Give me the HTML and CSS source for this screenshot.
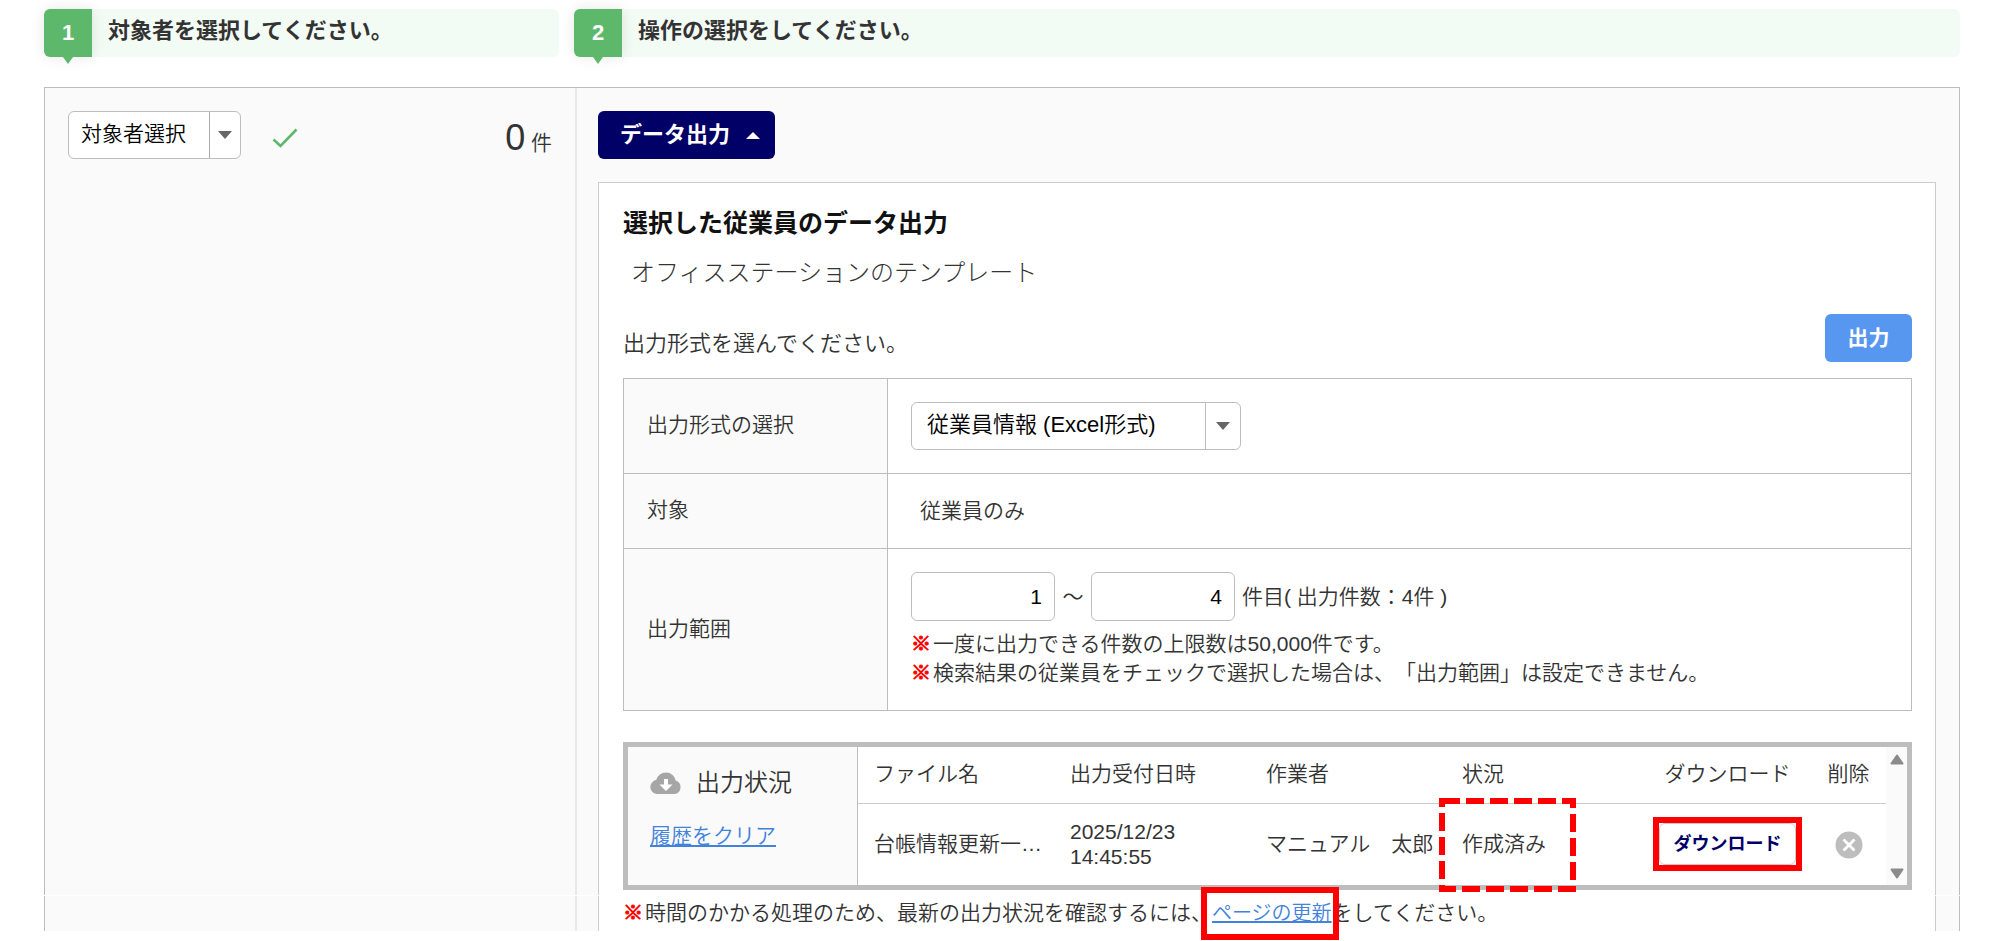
FILE: index.html
```html
<!DOCTYPE html>
<html lang="ja">
<head>
<meta charset="utf-8">
<title>データ出力</title>
<link rel="stylesheet" href="styles.css">
</head>
<body>
<main class="page">
  <ol class="steps">
    <li class="step"><span class="step-number">1</span><span class="step-label">対象者を選択してください。</span></li>
    <li class="step"><span class="step-number">2</span><span class="step-label">操作の選択をしてください。</span></li>
  </ol>

  <div class="workspace">
    <section class="target">
      <div class="split-button">
        <button type="button" class="split-main">対象者選択</button>
        <button type="button" class="split-toggle" aria-label="対象者選択のメニューを開く"><span class="caret"></span></button>
      </div>
      <svg class="check" viewBox="0 0 26 20" aria-hidden="true"><path d="M1.5 11.5 8.5 18 24.5 1.5" fill="none" stroke="#5eb86c" stroke-width="2.6"/></svg>
      <p class="count"><span class="count-number">0</span> 件</p>
    </section>

    <section class="operation">
      <button type="button" class="tab-button">データ出力<span class="caret caret-up"></span></button>

      <div class="card">
        <h1 class="card-title">選択した従業員のデータ出力</h1>
        <h2 class="card-subtitle">オフィスステーションのテンプレート</h2>
        <div class="card-action">
          <p class="lead">出力形式を選んでください。</p>
          <button type="button" class="output-button">出力</button>
        </div>

        <table class="settings">
          <tr>
            <th scope="row"><label for="format">出力形式の選択</label></th>
            <td>
              <div class="select-box">
                <select id="format"><option>従業員情報 (Excel形式)</option></select>
                <span class="select-arrow"><span class="caret"></span></span>
              </div>
            </td>
          </tr>
          <tr>
            <th scope="row">対象</th>
            <td><p class="target-text">従業員のみ</p></td>
          </tr>
          <tr>
            <th scope="row">出力範囲</th>
            <td>
              <div class="range">
                <input type="text" value="1" aria-label="開始件目">
                <span class="wave">～</span>
                <input type="text" value="4" aria-label="終了件目">
                <span class="range-text">件目( 出力件数：4件 )</span>
              </div>
              <p class="note"><span class="mark">※</span>一度に出力できる件数の上限数は50,000件です。</p>
              <p class="note"><span class="mark">※</span>検索結果の従業員をチェックで選択した場合は、「出力範囲」は設定できません。</p>
            </td>
          </tr>
        </table>

        <div class="status">
          <div class="status-side">
            <p class="status-title">
              <svg class="cloud" viewBox="0 0 32 22" aria-hidden="true">
                <path d="M7 22a7 7 0 0 1-.8-13.9A10 10 0 0 1 25.700 8.500 7 7 0 0 1 25 22z" fill="#a6a6a6"/>
                <path d="M14 7h4v5.500h4.500L16 19l-6.500-6.500H14z" fill="#fff"/>
              </svg>
              出力状況
            </p>
            <a href="#clear" class="link">履歴をクリア</a>
          </div>
          <table class="history">
            <thead>
              <tr><th>ファイル名</th><th>出力受付日時</th><th>作業者</th><th>状況</th><th class="center">ダウンロード</th><th class="delete">削除</th></tr>
            </thead>
            <tbody>
              <tr>
                <td>台帳情報更新一…</td>
                <td class="date">2025/12/23<br>14:45:55</td>
                <td>マニュアル　太郎</td>
                <td class="state">作成済み
                  <svg class="dashed-frame" viewBox="0 0 137 94" aria-hidden="true"><path d="M3 3h131v88H3z" fill="none" stroke="#f00" stroke-width="6" stroke-dasharray="18 6"/></svg>
                </td>
                <td class="center"><span class="download-frame"><button type="button" class="download">ダウンロード</button></span></td>
                <td class="delete">
                  <button type="button" class="remove" aria-label="削除">
                    <svg viewBox="0 0 28 28" aria-hidden="true"><circle cx="14" cy="14" r="13.500" fill="#bdbdbd"/><path d="M8.500 8.500l11 11m0-11l-11 11" stroke="#fff" stroke-width="2.800"/></svg>
                  </button>
                </td>
              </tr>
            </tbody>
          </table>
          <div class="scrollbar" aria-hidden="true">
            <svg viewBox="0 0 14 11"><path d="M7 1.500 12.500 9.500h-11z" fill="#8b8b8b" stroke="#8b8b8b" stroke-width="2" stroke-linejoin="round"/></svg>
            <svg viewBox="0 0 14 11"><path d="M7 9.500 1.500 1.500h11z" fill="#8b8b8b" stroke="#8b8b8b" stroke-width="2" stroke-linejoin="round"/></svg>
          </div>
        </div>

        <p class="note footnote"><span class="mark">※</span>時間のかかる処理のため、最新の出力状況を確認するには、<span class="framed"><a href="#reload" class="link">ページの更新</a></span>をしてください。</p>
      </div>
    </section>
  </div>
</main>
</body>
</html>
```
FILE: styles.css
```css
* {
  box-sizing: border-box;
}

body {
  margin: 0;
  background: #fff;
  color: #333;
  font-family: "Liberation Sans", "Noto Sans CJK JP", sans-serif;
  font-size: 21px;
  font-weight: 350;
  line-height: 30px;
  text-spacing-trim: space-all;
}

h1, h2, p, ol {
  margin: 0;
  padding: 0;
}

button, input, select {
  margin: 0;
  color: #000;
  font: inherit;
}

.page {
  padding: 9px 42px 9px 44px;
}

/* Step headings */
.steps {
  display: grid;
  grid-template-columns: 515px 1fr;
  gap: 15px;
  list-style: none;
}

.step {
  display: flex;
  height: 48px;
  border-radius: 6px;
  background: #f3fbf5;
  font-size: 22px;
  font-weight: bold;
  line-height: 44px;
}

.step-number {
  position: relative;
  width: 48px;
  border-radius: 6px 0 0 6px;
  background: #5eb86c;
  box-shadow: 0 0 14px rgba(0, 0, 0, 0.1);
  color: #fff;
  line-height: 48px;
  text-align: center;
}

.step-number::after {
  content: "";
  position: absolute;
  top: 100%;
  left: 19px;
  border: 5px solid transparent;
  border-top: 7px solid #5eb86c;
  border-bottom: 0;
}

.step-label {
  padding-left: 16px;
}

/* Two-pane work area */
.workspace {
  position: relative;
  display: flex;
  margin-top: 30px;
  border: 1px solid #bdbdbd;
  border-bottom: 0;
  background: #fafafa;
}

.workspace::after {
  content: "";
  position: absolute;
  right: -1px;
  bottom: 35px;
  left: -1px;
  height: 1px;
  background: #fff;
}

.target {
  display: flex;
  flex: none;
  align-items: flex-start;
  width: 532px;
  padding: 23px 23px 0 23px;
  border-right: 2px solid #e8e8e8;
}

.split-button {
  display: flex;
  height: 48px;
  border: 1px solid #bdbdbd;
  border-radius: 6px;
  background: #fff;
}

.split-main,
.split-toggle {
  border: 0;
  background: none;
}

.split-main {
  width: 140px;
  padding: 0 20px 2px 12px;
  text-align: left;
  white-space: nowrap;
}

.split-toggle {
  display: flex;
  align-items: center;
  justify-content: center;
  width: 31px;
  padding: 0;
  border-left: 1px solid #aaa;
}

.caret {
  border: 7px solid transparent;
  border-top: 8px solid #666;
  border-bottom: 0;
}

.caret-up {
  border: 7px solid transparent;
  border-top: 0;
  border-bottom: 7px solid #fff;
}

.check {
  width: 26px;
  height: 20px;
  margin: 17px 0 0 31px;
}

.count {
  margin: 7px 0 0 auto;
  line-height: 40px;
}

.count-number {
  font-size: 36px;
}

.operation {
  flex: 1;
  min-width: 0;
  padding: 23px 23px 0 21px;
}

.tab-button {
  display: flex;
  align-items: center;
  gap: 16px;
  height: 48px;
  padding: 0 15px 0 22px;
  border: 0;
  border-radius: 6px;
  background: #006;
  color: #fff;
  font-size: 22px;
  font-weight: bold;
}

.card {
  margin-top: 23px;
  padding: 22px 23px 3px 24px;
  border: 1px solid #ccc;
  border-bottom: 0;
  background: #fff;
}

.card-title {
  color: #111;
  font-size: 25px;
  line-height: 36px;
}

.card-subtitle {
  margin-top: 14px;
  padding-left: 8px;
  font-size: 24px;
  font-weight: 300;
  line-height: 36px;
}

.card-action {
  display: flex;
  align-items: flex-end;
  justify-content: space-between;
  margin: 23px 0 16px;
}

.lead {
  font-size: 22px;
  line-height: 36px;
}

.output-button {
  width: 87px;
  height: 48px;
  padding: 0;
  border: 0;
  border-radius: 6px;
  background: #5797f0;
  color: #fff;
  font-weight: bold;
}

/* Output settings */
.settings {
  width: 100%;
  border-collapse: collapse;
}

.settings th,
.settings td {
  padding: 23px;
  border: 1px solid #bdbdbd;
  font-weight: inherit;
  text-align: left;
}

.settings th {
  width: 264px;
  padding: 20px 23px 22px;
  background: #fafafa;
}

.settings td {
  background: #fff;
}

.target-text {
  padding: 0 9px;
  line-height: 28px;
}

.select-box {
  position: relative;
  width: 330px;
}

.select-box select {
  display: block;
  width: 100%;
  height: 48px;
  padding: 0 40px 2px 15px;
  appearance: none;
  border: 1px solid #bdbdbd;
  border-radius: 6px;
  background: #fff;
  font-size: 22px;
}

.select-arrow {
  position: absolute;
  top: 0;
  right: 0;
  display: flex;
  align-items: center;
  justify-content: center;
  width: 36px;
  height: 48px;
  padding-right: 2px;
  border-left: 1px solid #bdbdbd;
  pointer-events: none;
}

.range {
  display: flex;
  align-items: center;
  margin-bottom: 8px;
}

.range input {
  width: 144px;
  height: 49px;
  padding: 0 12px;
  border: 1px solid #bdbdbd;
  border-radius: 6px;
  background: #fff;
  text-align: right;
}

.wave {
  width: 36px;
  text-align: center;
}

.range-text {
  padding-left: 7px;
}

.note {
  line-height: 29px;
}

.mark {
  margin-right: 2px;
  color: #f00;
  font-size: 20px;
  font-weight: bold;
  line-height: 20px;
  -webkit-text-stroke: 1px #f00;
}

/* Output status */
.status {
  display: flex;
  height: 148px;
  margin-top: 31px;
  border: 5px solid #bdbdbd;
}

.status-side {
  flex: none;
  width: 230px;
  padding: 18px 22px;
  border-right: 1px solid #bdbdbd;
  background: #fafafa;
}

.status-title {
  display: flex;
  align-items: center;
  gap: 14px;
  margin-bottom: 20px;
  font-size: 24px;
  line-height: 36px;
}

.cloud {
  width: 32px;
  height: 22px;
}

.link {
  color: #4182dd;
  text-decoration: underline;
}

.history {
  flex: 1;
  border-collapse: collapse;
  table-layout: fixed;
}

.history th,
.history td {
  width: 196px;
  padding: 0 0 0 16px;
  font-weight: inherit;
  text-align: left;
  white-space: nowrap;
}

.history th {
  height: 56px;
  padding-bottom: 2px;
  border-bottom: 1px solid #ccc;
}

.history th.center,
.history td.center {
  width: auto;
  padding-left: 2px;
  text-align: center;
}

.history th.delete,
.history td.delete {
  width: 75px;
  padding-left: 0;
  text-align: center;
}

.history .date {
  line-height: 25px;
}

.history .state {
  position: relative;
}

.dashed-frame {
  position: absolute;
  top: -6px;
  left: -7px;
  width: 137px;
  height: 94px;
}

.download-frame {
  display: inline-block;
  border: 6px solid #f00;
  vertical-align: middle;
}

.download {
  display: block;
  width: 137px;
  height: 42px;
  padding: 0;
  border: 1px solid #ccc;
  border-radius: 6px;
  background: #fff;
  color: #006;
  font-size: 18px;
  font-weight: bold;
}

.remove {
  width: 28px;
  height: 28px;
  padding: 0;
  border: 0;
  background: none;
  vertical-align: middle;
}

.remove svg {
  display: block;
}

.scrollbar {
  display: flex;
  flex: none;
  flex-direction: column;
  align-items: center;
  justify-content: space-between;
  width: 21px;
  padding: 7px 0 6px;
  background: #fafafa;
}

.scrollbar svg {
  width: 14px;
  height: 11px;
}

.footnote {
  margin-top: 8px;
  line-height: 30px;
}

.framed {
  position: relative;
  z-index: 1;
  font-size: 20px;
}

.framed::after {
  content: "";
  position: absolute;
  inset: -15px -7px -16px -11px;
  border: 6px solid #f00;
  pointer-events: none;
}
```
